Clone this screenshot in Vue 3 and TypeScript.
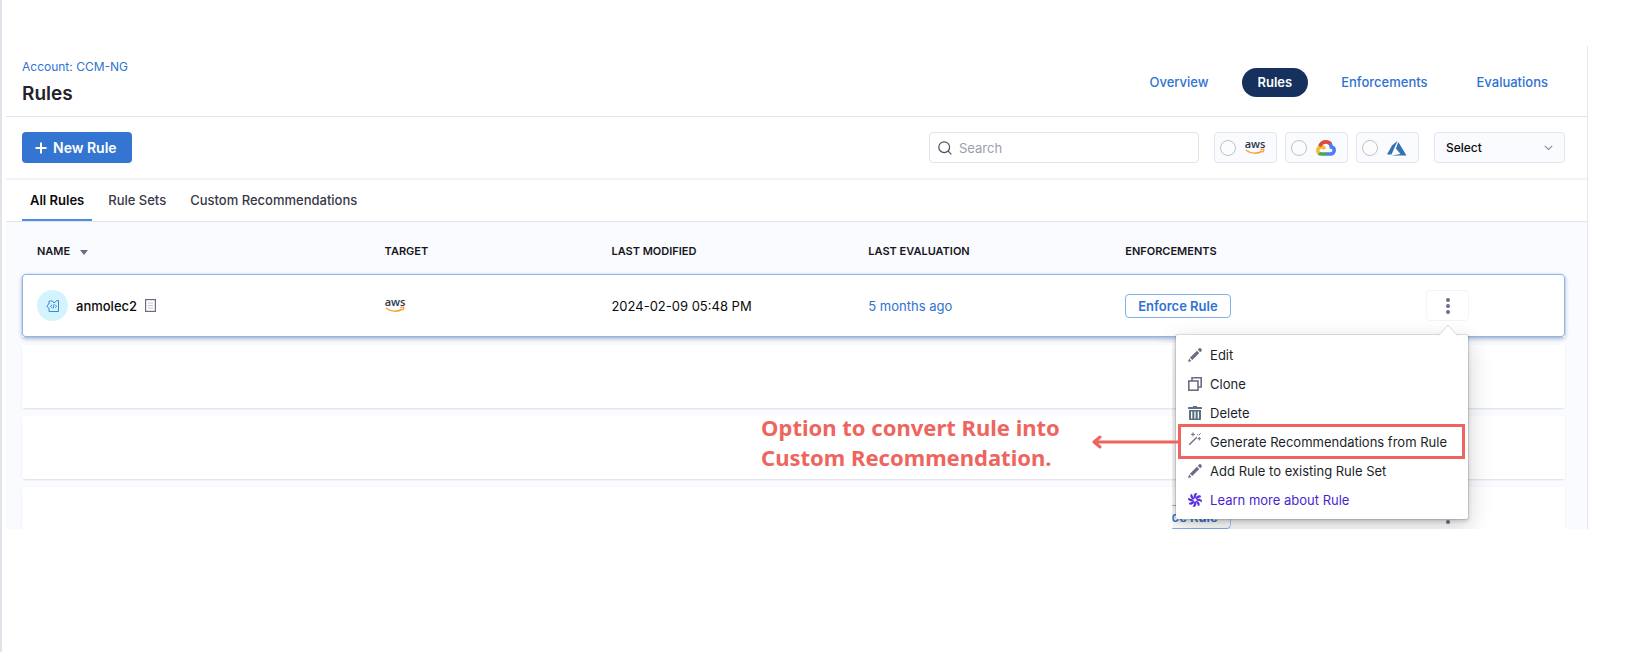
<script setup lang="ts">
import { ref } from 'vue'

interface Rule {
  name: string
  modified: string
  evaluated: string
}

const sections = ['Overview', 'Rules', 'Enforcements', 'Evaluations']
const tabs = ['All Rules', 'Rule Sets', 'Custom Recommendations']
const rules: Rule[] = [
  { name: 'anmolec2', modified: '2024-02-09 05:48 PM', evaluated: '5 months ago' },
]
const activeTab = ref('All Rules')
const search = ref('')
const provider = ref('')
</script>

<template>
  <div class="shell">
    <main class="page">
      <header class="header">
        <div>
          <a class="crumb" href="#">Account: CCM-NG</a>
          <h1>Rules</h1>
        </div>
        <nav class="sections">
          <a v-for="s in sections" :key="s" href="#" :class="{ current: s === 'Rules' }">{{ s }}</a>
        </nav>
      </header>

      <div class="toolbar">
        <button class="new-rule" type="button">
          <svg width="12" height="12" viewBox="0 0 12 12"><path d="M6 .5v11M.5 6h11" stroke="#fff" stroke-width="2" /></svg>
          New Rule
        </button>
        <div class="search">
          <svg width="14" height="14" viewBox="0 0 14 14" fill="none" stroke="#4f5162" stroke-width="1.2">
            <circle cx="6.2" cy="6.2" r="5.4" /><path d="M10.2 10.2l3.2 3.2" />
          </svg>
          <input v-model="search" type="text" placeholder="Search" aria-label="Search" />
        </div>
        <div class="providers">
          <label class="provider">
            <input v-model="provider" type="radio" name="provider" value="aws" aria-label="AWS" />
            <svg class="aws" width="20" height="16" viewBox="0 0 20 16">
              <text x="10" y="8" text-anchor="middle">aws</text>
              <path d="M.8 10c5 4 12 4 16.800 1" fill="none" stroke="#f7a13a" stroke-width="1.500" />
              <path d="M15.400 9.600c2-.6 3.600-.5 3.600 0s-.2 1.600-1.200 2.800" fill="none" stroke="#f7a13a" stroke-width="1.200" />
            </svg>
          </label>
          <label class="provider">
            <input v-model="provider" type="radio" name="provider" value="gcp" aria-label="Google Cloud" />
            <svg width="20" height="16" viewBox="0 0 20 16" fill="none" stroke-width="3.600">
              <path d="M4.300 14C2.800 13.300 1.800 12 1.800 10.400c0-2.200 1.700-3.500 3.600-3.500 1.400 0 2.700.8 3.500 2" stroke="#f3bd34" />
              <path d="M3.800 6.400C4.800 3.500 7.400 1.900 10 1.900c2 0 3.700 1 4.800 2.500" stroke="#dc4a3d" />
              <path d="M14 3.800c.9 1 1.200 2.200 1.300 3.200 2 .2 2.900 1.700 2.900 3.300 0 2.200-1.500 3.700-3.700 3.700H10" stroke="#4a80ee" />
              <path d="M10.500 14H5.800c-1 0-1.900-.3-2.700-.9" stroke="#4aa558" />
            </svg>
          </label>
          <label class="provider">
            <input v-model="provider" type="radio" name="provider" value="azure" aria-label="Azure" />
            <svg width="20" height="16" viewBox="0 0 20 16" fill="#3371b1">
              <path d="M10.600.8L5 5.600 0 14.400h4.500z" /><path d="M11.300 1.900L8.900 8.500l4.600 5.500-9 1.500H19.500z" />
            </svg>
          </label>
        </div>
        <div class="picker">
          <select aria-label="Rule filter"><option>Select</option></select>
          <svg width="9" height="6" viewBox="0 0 9 6"><path d="M.8.8l3.700 3.700L8.200.8" fill="none" stroke="#8f90a6" stroke-width="1.200" /></svg>
        </div>
      </div>

      <div class="tabs" role="tablist">
        <button
          v-for="t in tabs"
          :key="t"
          type="button"
          role="tab"
          :aria-selected="activeTab === t"
          :class="{ active: activeTab === t }"
          @click="activeTab = t"
        >{{ t }}</button>
      </div>

      <section class="content">
        <table>
          <colgroup>
            <col class="c-name" /><col class="c-target" /><col class="c-date" /><col class="c-date" /><col class="c-enforce" /><col />
          </colgroup>
          <thead>
            <tr>
              <th>NAME
                <svg class="caret" width="8" height="5" viewBox="0 0 8 5"><path d="M0 0h8L4 5z" fill="#6b6d85" /></svg>
              </th>
              <th>TARGET</th>
              <th>LAST MODIFIED</th>
              <th>LAST EVALUATION</th>
              <th>ENFORCEMENTS</th>
              <th></th>
            </tr>
          </thead>
          <tbody>
            <tr v-for="r in rules" :key="r.name" class="selected">
              <td>
                <div class="name">
                  <span class="avatar">
                    <svg width="14" height="14" viewBox="0 0 14 14" fill="none" stroke="#3f87d8" stroke-width="1">
                      <path d="M3 5V2h3.500L8 4l3-2.500h1.500v11H3V9.500" />
                      <path d="M3 4.500L1 7.200l2 2.600M6 5.800L4.600 7.300 6 8.800M9.200 5.800l1.400 1.500-1.400 1.500M8.100 5.200l-1 4.200" />
                    </svg>
                  </span>
                  <span>{{ r.name }}</span>
                  <svg class="note" width="11" height="13" viewBox="0 0 11 13" fill="none">
                    <rect x=".6" y=".6" width="9.800" height="11.800" stroke="#6b6d85" stroke-width="1.200" />
                    <path d="M3 4h5M3 6.500h5M3 9h5" stroke="#c3c4d2" stroke-width="1" />
                  </svg>
                </div>
              </td>
              <td>
                <svg class="aws" width="20" height="16" viewBox="0 0 20 16">
                  <text x="10" y="8" text-anchor="middle">aws</text>
                  <path d="M.8 10c5 4 12 4 16.800 1" fill="none" stroke="#f7a13a" stroke-width="1.500" />
                  <path d="M15.400 9.600c2-.6 3.600-.5 3.600 0s-.2 1.600-1.200 2.800" fill="none" stroke="#f7a13a" stroke-width="1.200" />
                </svg>
              </td>
              <td>{{ r.modified }}</td>
              <td><a href="#">{{ r.evaluated }}</a></td>
              <td><button class="enforce" type="button">Enforce Rule</button></td>
              <td>
                <div class="actions">
                  <button class="kebab" type="button" aria-label="Rule actions">
                    <svg width="4" height="16" viewBox="0 0 4 16" fill="#6b6d85"><circle cx="2" cy="2" r="2" /><circle cx="2" cy="8" r="2" /><circle cx="2" cy="14" r="2" /></svg>
                  </button>
                  <div class="popover">
                    <div class="surface"></div>
                    <svg class="arrow" width="24" height="12" viewBox="0 0 24 12">
                      <path d="M1 11.500C5 11 6 8.500 9.500 4L12 1.200 14.500 4C18 8.500 19 11 23 11.500V12H1z" fill="#fff" />
                      <path d="M1 11C5 10.500 6 8 9.500 3.500Q12 .2 14.500 3.500C18 8 19 10.500 23 11" fill="none" stroke="#d5d7dc" />
                    </svg>
                    <ul>
                      <li>
                        <button type="button">
                          <svg width="14" height="14" viewBox="0 0 14 14" fill="#6b6d85"><path d="M0 14l1.100-3.400 2.300 2.300zM1.900 9.700l7-7 2.400 2.400-7 7zM9.800 1.800l1.300-1.300c.6-.6 1.200-.5 1.700 0l.7.700c.5.500.5 1.100 0 1.700L12.200 4.200z" /></svg>
                          Edit
                        </button>
                      </li>
                      <li>
                        <button type="button">
                          <svg width="14" height="14" viewBox="0 0 14 14" fill="none" stroke="#6b6d85" stroke-width="1.600"><rect x=".8" y="4" width="9.200" height="9.200" /><path d="M4 4V.8h9.200V10H10" /></svg>
                          Clone
                        </button>
                      </li>
                      <li>
                        <button type="button">
                          <svg width="14" height="14" viewBox="0 0 14 14" fill="#5c7080"><path fill-rule="evenodd" d="M5 0h4v1h4c.6 0 1 .4 1 1v1H0V2c0-.6.4-1 1-1h4zM1 4h12v9c0 .6-.4 1-1 1H2c-.6 0-1-.4-1-1zM3 5.500v7h1.300v-7zM6.350 5.500v7h1.300v-7zM9.700 5.500v7H11v-7z" /></svg>
                          Delete
                        </button>
                      </li>
                      <li class="marked">
                        <button type="button">
                          <svg class="wand" width="14" height="14" viewBox="0 0 14 14" fill="none" stroke="#6b6d85"><path d="M1.200 12.800L8.800 5.200" stroke-width="1.300" /><path d="M5 .4v4M3 2.400h4M11.300 5v3.400M9.600 6.700H13M10.800 3.200l1.800-1.800M9 2l.8.800" stroke-width="1" /></svg>
                          Generate Recommendations from Rule
                        </button>
                        <svg class="pointer" width="89" height="14" viewBox="0 0 89 14" fill="none" stroke="#ee6560" stroke-width="3" stroke-linecap="round" stroke-linejoin="round"><path d="M88 7H3M8 2L2 7l6 5" /></svg>
                      </li>
                      <li>
                        <button type="button">
                          <svg width="14" height="14" viewBox="0 0 14 14" fill="#6b6d85"><path d="M0 14l1.100-3.400 2.300 2.300zM1.900 9.700l7-7 2.400 2.400-7 7zM9.800 1.800l1.300-1.300c.6-.6 1.200-.5 1.700 0l.7.700c.5.500.5 1.100 0 1.700L12.200 4.200z" /></svg>
                          Add Rule to existing Rule Set
                        </button>
                      </li>
                      <li>
                        <a class="learn" href="#">
                          <svg width="14" height="14" viewBox="0 0 14 14" fill="#5a30e0">
                            <path v-for="n in 8" :key="n" d="M6.600 5.700C5.200 4 5.300 1.500 7.400 0L9.500.5C8.400 1.600 8 2.600 8.100 3.800L7.300 5.700z" :transform="`rotate(${n * 45} 7 7)`" />
                          </svg>
                          Learn more about Rule
                        </a>
                      </li>
                    </ul>
                    <p class="callout">Option to convert Rule into<br />Custom Recommendation.</p>
                  </div>
                </div>
              </td>
            </tr>
            <tr><td colspan="6"></td></tr>
            <tr><td colspan="6"></td></tr>
            <tr class="cut">
              <td></td><td></td><td></td><td></td>
              <td><button class="enforce" type="button">Enforce Rule</button></td>
              <td>
                <button class="kebab" type="button" aria-label="Rule actions">
                  <svg width="4" height="16" viewBox="0 0 4 16" fill="#6b6d85"><circle cx="2" cy="2" r="2" /><circle cx="2" cy="8" r="2" /><circle cx="2" cy="14" r="2" /></svg>
                </button>
              </td>
            </tr>
          </tbody>
        </table>
      </section>
    </main>
  </div>
</template>

<style>
body { background: #fff; }
</style>

<style scoped>
* { box-sizing: border-box; }
.shell {
  min-height: 100vh;
  border-left: 2px solid #e2e2ea;
  padding: 46px 38px 0 4px;
  font-family: Inter, "Liberation Sans", sans-serif;
  font-size: 13px;
  color: #0b0b0d;
}
button, input, select { font: inherit; color: inherit; }
button { cursor: pointer; }
a { color: #2f73d0; text-decoration: none; }
svg { display: block; flex: none; }
.page { border-right: 1px solid #e4e5ed; overflow: hidden; }

.header {
  display: flex;
  justify-content: space-between;
  align-items: center;
  height: 71px;
  padding: 2px 23px 0 16px;
  border-bottom: 1px solid #e2e4ec;
}
.crumb { display: block; font-size: 12px; line-height: 16px; }
h1 { margin: 7px 0 0; font-size: 19px; line-height: 24px; font-weight: 600; color: #22222a; }
.sections { display: flex; gap: 17px; }
.sections a { padding: 0 16px; line-height: 29px; border-radius: 15px; font-weight: 500; }
.sections .current { background: #17315f; color: #fff; font-weight: 600; }

.toolbar {
  display: flex;
  gap: 15px;
  align-items: center;
  height: 63px;
  padding: 0 22px 0 16px;
  border-bottom: 2px solid #f2f3f6;
}
.new-rule {
  display: flex;
  align-items: center;
  gap: 6px;
  height: 31px;
  margin-right: auto;
  padding: 0 15px 0 13px;
  border: 0;
  border-radius: 4px;
  background: #3375d0;
  color: #fff;
  font-size: 14px;
  font-weight: 600;
}
.search {
  display: flex;
  align-items: center;
  gap: 7px;
  width: 270px;
  height: 31px;
  padding: 0 8px;
  border: 1px solid #e2e3ec;
  border-radius: 4px;
}
.search input { flex: 1; min-width: 0; border: 0; padding: 0; outline: 0; background: none; }
.search input::placeholder { color: #9aa0ad; opacity: 1; }
.providers { display: flex; gap: 8px; }
.provider {
  display: flex;
  align-items: center;
  gap: 9px;
  width: 63px;
  height: 31px;
  padding-left: 5px;
  border: 1px solid #e4e5ef;
  border-radius: 4px;
  background: #fafbff;
}
.provider input { appearance: none; width: 16px; height: 16px; margin: 0; border: 1px solid #bfc2c8; border-radius: 50%; background: #fcfcfc; }
.aws { overflow: visible; }
.aws text { font: 600 11px "Open Sans", sans-serif; fill: #2c3648; }
.picker { position: relative; width: 131px; }
.picker select { appearance: none; width: 100%; height: 31px; padding: 0 11px; border: 1px solid #e4e5ef; border-radius: 4px; background: #fafbff; font-size: 12px; font-weight: 500; }
.picker svg { position: absolute; right: 12px; top: 13px; pointer-events: none; }

.tabs { display: flex; gap: 8px; height: 42px; padding: 0 16px; border-bottom: 1px solid #e2e4ec; }
.tabs button { padding: 0 8px; border: 0; border-bottom: 2px solid transparent; background: none; color: #383946; font-weight: 500; }
.tabs .active { border-bottom-color: #4a8fe0; color: #0b0b0d; font-weight: 600; }

.content { padding: 0 22px 0 16px; background: #fafbff; }
table { width: 100%; margin-bottom: -8px; table-layout: fixed; border-collapse: separate; border-spacing: 0 8px; }
.c-name { width: 23.5%; }
.c-target { width: 14.7%; }
.c-date { width: 16.65%; }
.c-enforce { width: 19.5%; }
th { height: 36px; padding: 6px 0 0; text-align: left; font-size: 11px; line-height: 16px; font-weight: 600; color: #16161c; }
th:first-child, td:first-child { padding-left: 15px; }
.caret { display: inline-block; margin-left: 7px; }
tbody tr { height: 63px; border-radius: 4px; background: #fff; box-shadow: 0 1px 2px rgba(40, 41, 61, .14); }
tbody tr.selected { box-shadow: inset 0 0 0 1px #8db8e8, 0 0 1px #5d93d0, 0 2px 4px rgba(60, 80, 120, .4); }
td { padding: 0; }
.name { display: flex; align-items: center; gap: 8px; font-weight: 500; }
.avatar { display: grid; place-items: center; width: 31px; height: 31px; border-radius: 50%; background: #d3f3fd; }
.enforce { display: block; height: 24px; padding: 0 12px; border: 1px solid #83b1ea; border-radius: 4px; background: #fff; color: #2f73d0; font-weight: 600; line-height: 16px; }
.kebab { display: grid; place-items: center; width: 43px; height: 31px; padding: 0; border: 1px solid #f3f4f8; border-radius: 4px; background: #fff; }
tbody tr.cut { height: 42px; }
.cut td { vertical-align: top; }
.cut .enforce { margin-top: 18px; clip-path: inset(0 0 0 47px); }
.cut .kebab { margin-top: 15px; height: 27px; border: 0; background: none; }

.actions { position: relative; }
.popover { position: absolute; z-index: 2; right: calc(100% - 42px); top: 45px; width: max-content; min-width: 292px; }
.surface {
  position: absolute;
  inset: 0;
  border-radius: 2px;
  background: #fff;
  box-shadow: 0 0 0 1px rgba(16, 22, 26, .1), 0 2px 4px rgba(16, 22, 26, .2), 0 8px 24px rgba(16, 22, 26, .2);
  clip-path: polygon(-40px -40px, 120% -40px, 120% 130%, -4px 130%, -4px 8px, -40px 8px);
}
.arrow { position: absolute; right: 8px; top: -11px; }
ul { position: relative; margin: 0; padding: 5px 6px 5px 5px; list-style: none; }
li { position: relative; }
li button, li a { display: flex; align-items: center; gap: 8px; width: 100%; height: 29px; padding: 0 7px; border: 0; background: none; color: #1c1f28; white-space: nowrap; }
li a.learn { color: #4a1fd0; }
.wand { margin-bottom: 5px; }
.marked { outline: 3px solid #ee6560; }
.pointer { position: absolute; right: 100%; top: 8px; }
.callout { position: absolute; left: -415px; top: 77px; width: max-content; margin: 0; color: #ee6560; font: 700 22px/30px "Noto Sans", sans-serif; }
</style>
